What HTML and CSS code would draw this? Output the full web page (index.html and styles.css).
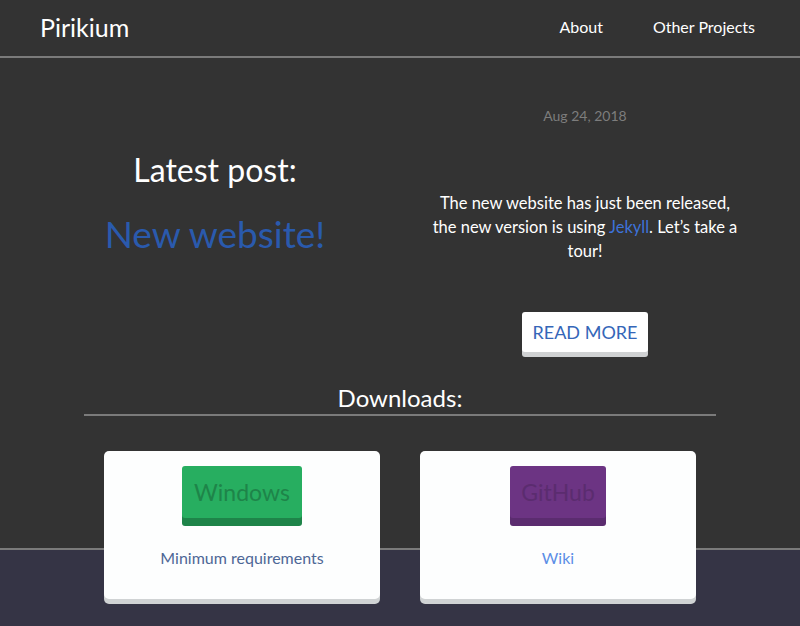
FILE: index.html
```html
<!DOCTYPE html>
<html>
<head>
<meta charset="utf-8">
<link rel="stylesheet" href="styles.css">
</head>
<body>
<header class="topbar">
  <div class="brand">Pirikium</div>
  <nav class="nav">
    <a href="#">About</a>
    <a href="#">Other Projects</a>
  </nav>
</header>
<main class="content">
  <section class="post">
    <div class="post-left">
      <h2 class="latest">Latest post:</h2>
      <h1 class="post-title">New website!</h1>
    </div>
    <div class="post-right">
      <div class="date">Aug 24, 2018</div>
      <p class="excerpt">The new website has just been released, the new version is using <a href="#">Jekyll</a>. Let’s take a tour!</p>
      <a class="read-more" href="#">READ MORE</a>
    </div>
  </section>
  <section class="downloads">
    <h2 class="dl-title">Downloads:</h2>
    <div class="dl-rule"></div>
    <div class="cards">
      <div class="card">
        <a class="dl-btn windows" href="#">Windows</a>
        <a class="card-link dark" href="#">Minimum requirements</a>
      </div>
      <div class="card">
        <a class="dl-btn github" href="#">GitHub</a>
        <a class="card-link light" href="#">Wiki</a>
      </div>
    </div>
  </section>
</main>
</body>
</html>
```
FILE: styles.css
```css
html, body {
  margin: 0;
  padding: 0;
}
body {
  background: #353445;
  font-family: Lato, "Open Sans", sans-serif;
  color: #fff;
  height: 626px;
  overflow: hidden;
}
a { text-decoration: none; }

.topbar {
  background: #333333;
  height: 56px;
  border-bottom: 2px solid #7b7b7b;
  display: flex;
  align-items: center;
  justify-content: space-between;
  padding: 0 45px 0 40px;
}
.brand {
  font-size: 25px;
  font-weight: 400;
  color: #fff;
  padding-bottom: 3px;
}
.nav {
  display: flex;
  gap: 50px;
  padding-bottom: 3px;
}
.nav a {
  color: #fff;
  font-size: 16px;
}

.content {
  background: #333333;
  height: 490px;
  border-bottom: 2px solid #7b7b7b;
}

.post {
  display: grid;
  grid-template-columns: 370px 370px;
  padding: 0 30px;
}
.post-left {
  text-align: center;
  padding-top: 92px;
}
.latest {
  margin: 0;
  font-size: 32px;
  font-weight: 400;
  line-height: 40px;
  color: #fff;
}
.post-title {
  margin: 22px 0 0;
  font-size: 37px;
  font-weight: 400;
  line-height: 44px;
  color: #2a5aad;
}
.post-right {
  text-align: center;
  padding-top: 48px;
  display: flex;
  flex-direction: column;
  align-items: center;
}
.date {
  font-size: 14px;
  color: #7d7d7d;
  line-height: 20px;
}
.excerpt {
  margin: 65px 0 0;
  font-size: 16.5px;
  line-height: 24px;
  color: #fff;
  width: 318px;
}
.excerpt a { color: #3d72d9; }
.read-more {
  margin-top: 49px;
  background: #fff;
  color: #3566b8;
  font-size: 18px;
  padding: 0 11px;
  height: 40px;
  line-height: 40px;
  border-radius: 3px;
  box-shadow: 0 5px 0 #cfd1d2;
}

.downloads {
  margin-top: 31px;
}
.dl-title {
  margin: 0;
  text-align: center;
  font-size: 24px;
  font-weight: 400;
  line-height: 30px;
  color: #fff;
}
.dl-rule {
  margin: 1px 84px 0;
  height: 2px;
  background: #7b7b7b;
}
.cards {
  display: flex;
  justify-content: center;
  gap: 40px;
  margin-top: 35px;
}
.card {
  width: 276px;
  height: 148px;
  background: #fdfefe;
  border-radius: 5px;
  box-shadow: 0 5px 0 #d0d3d4;
  display: flex;
  flex-direction: column;
  align-items: center;
  padding-top: 15px;
  box-sizing: border-box;
}
.dl-btn {
  display: block;
  height: 52px;
  line-height: 52px;
  border-radius: 3px;
  font-size: 23px;
  text-align: center;
}
.windows {
  width: 120px;
  background: #27ae60;
  color: #1e8449;
  box-shadow: 0 8px 0 #1e8449;
}
.github {
  width: 96px;
  background: #6c3483;
  color: #5b2c6f;
  box-shadow: 0 8px 0 #5b2c6f;
}
.card-link {
  margin-top: 30px;
  font-size: 16px;
}
.dark { color: #4d6796; }
.light { color: #5b8ee6; }
```
